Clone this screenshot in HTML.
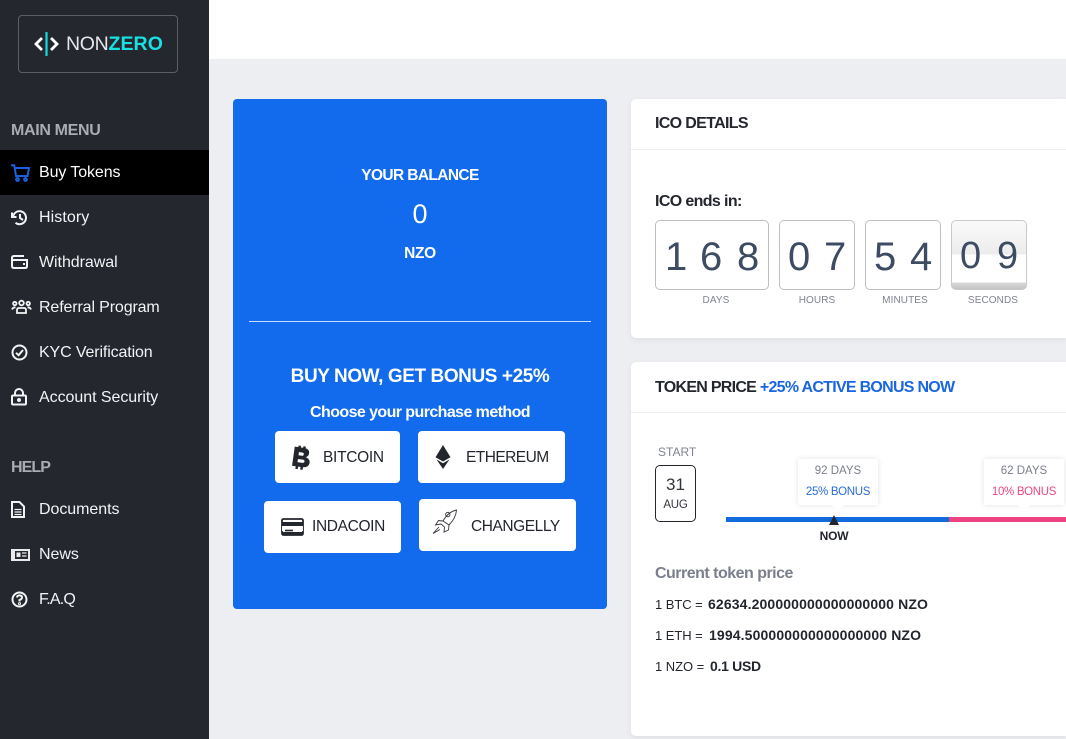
<!DOCTYPE html>
<html><head><meta charset="utf-8"><style>
*{box-sizing:border-box}
html,body{margin:0;padding:0;width:1066px;height:739px;overflow:hidden;background:#edeef2;font-family:"Liberation Sans",sans-serif;color:#23262d}
.a{position:absolute;white-space:nowrap}
.c{text-align:center}
.b{font-weight:700}
#side{position:absolute;left:0;top:0;width:209px;height:739px;background:#24272e}
.nav{position:absolute;left:39px;font-size:16px;line-height:20px;color:#f2f3f5;white-space:nowrap;letter-spacing:-.05px}
.sec{position:absolute;left:11px;font-size:16px;line-height:20px;font-weight:700;color:#a9abb5;white-space:nowrap}
.ic{position:absolute;left:11px;fill:none;stroke:#f2f3f5;stroke-width:2}
.card{position:absolute;background:#fff;border-radius:5px 0 0 5px;box-shadow:0 2px 6px rgba(60,60,80,.08)}
.btn{position:absolute;background:#fff;border-radius:4px;font-size:15.5px;line-height:20px;color:#23262d}
.box{position:absolute;top:220px;height:70px;border:1px solid #bdbfc4;border-radius:5px;background:#fff;color:#3d4c63;font-size:40px;line-height:72px;white-space:nowrap}
.box span{position:absolute;top:0}
.lbl{position:absolute;top:295px;font-size:10px;line-height:12px;letter-spacing:.1px;color:#7f8391;text-align:center;white-space:nowrap}
.tip{position:absolute;top:459px;width:80px;height:46px;background:#fff;box-shadow:0 0 5px rgba(60,60,80,.15);font-size:11.5px;text-align:center}
.tip i{position:absolute;left:34px;bottom:-6px;width:0;height:0;border-left:6px solid transparent;border-right:6px solid transparent;border-top:6px solid #fff}
.p{font-size:13px;line-height:16px;letter-spacing:-.05px}
.p b{position:absolute;top:-1px;font-size:14px;letter-spacing:.13px}
</style></head><body>
<div id="side">
<div class="a" style="left:18px;top:15px;width:160px;height:58px;border:1px solid #5b5e66;border-radius:4px"></div>
<svg class="a" style="left:33px;top:31px" width="28" height="26" viewBox="0 0 28 26"><path d="M9 7L3 13L9 19" fill="none" stroke="#fff" stroke-width="2.8"/><path d="M18 7L24 13L18 19" fill="none" stroke="#fff" stroke-width="2.8"/><path d="M13.5 1V25" stroke="#17d9e0" stroke-width="2.2"/></svg>
<div class="a" style="left:66px;top:33px;font-size:19.5px;line-height:23px;color:#e6e7ea;letter-spacing:-.3px">NON<span style="font-weight:700;color:#19e0e2;letter-spacing:.1px">ZERO</span></div>
<div class="sec" style="top:121px;letter-spacing:-.33px">MAIN MENU</div>
<div class="a" style="left:0;top:150px;width:209px;height:45px;background:#000"></div>
<svg class="ic" style="top:164px;stroke:#1c5fe0" width="19" height="18" viewBox="0 0 19 18"><path d="M0 1.2H3.2L5 12H16.5L18 4H3.8"/><circle cx="6.5" cy="15.5" r="1.4"/><circle cx="14.5" cy="15.5" r="1.4"/></svg>
<div class="nav" style="top:163px;color:#fff;letter-spacing:-.1px">Buy Tokens</div>
<svg class="ic" style="top:209px" width="17" height="17" viewBox="0 0 17 17"><path d="M2 8.5A6.5 6.5 0 1 1 4.5 13.8"/><path d="M1 3.5V8H5.5"/><path d="M9 5V9L12 11"/></svg>
<div class="nav" style="top:208px;letter-spacing:.08px">History</div>
<svg class="ic" style="top:254px" width="17" height="16" viewBox="0 0 17 16"><path d="M13 2H3Q1 2 1 4V12Q1 14 3 14H14Q16 14 16 12V6H1.5"/><path d="M12 10H14"/></svg>
<div class="nav" style="top:253px">Withdrawal</div>
<svg class="ic" style="top:299px;stroke-width:1.8" width="21" height="16" viewBox="0 0 21 16"><circle cx="10.5" cy="4" r="2.3"/><circle cx="3.8" cy="4.5" r="1.7"/><circle cx="17.2" cy="4.5" r="1.7"/><path d="M6 14V11Q6 9 8 9H13Q15 9 15 11V14Z"/><path d="M1 10.5Q2 8 4.5 8.5M20 10.5Q19 8 16.5 8.5"/></svg>
<div class="nav" style="top:298px;letter-spacing:-.13px">Referral Program</div>
<svg class="ic" style="top:344px" width="17" height="17" viewBox="0 0 17 17"><circle cx="8.5" cy="8.5" r="7"/><path d="M5 8.8L7.6 11.2L12 6"/></svg>
<div class="nav" style="top:343px;letter-spacing:-.13px">KYC Verification</div>
<svg class="ic" style="top:388px" width="16" height="18" viewBox="0 0 16 18"><rect x="1" y="7.5" width="14" height="9" rx="1"/><path d="M4 7.5V5A4 4 0 0 1 12 5V7.5"/><circle cx="8" cy="12" r="1" fill="#f2f3f5"/></svg>
<div class="nav" style="top:388px">Account Security</div>
<div class="sec" style="top:458px;letter-spacing:-.9px">HELP</div>
<svg class="ic" style="top:501px" width="14" height="17" viewBox="0 0 14 17"><path d="M1 1H8.5L13 5.5V16H1Z"/><path d="M3.5 8.5H10.5M3.5 11H10.5M3.5 13.5H10.5" stroke-width="1.3"/></svg>
<div class="nav" style="top:500px">Documents</div>
<svg class="ic" style="top:549px;stroke:none" width="19" height="12" viewBox="0 0 19 12"><rect x="0" y="0" width="19" height="12" fill="#e9e9ec"/><rect x="4" y="2" width="13" height="8" fill="#24272e"/><rect x="5.5" y="3.5" width="4" height="4.5" fill="#e9e9ec"/><path d="M11 4H15.5M11 7H15.5" stroke="#e9e9ec" stroke-width="1.3"/></svg>
<div class="nav" style="top:545px">News</div>
<svg class="ic" style="top:591px" width="17" height="17" viewBox="0 0 17 17"><circle cx="8.5" cy="8.5" r="7"/><path d="M6 6.5Q6.2 4.4 8.5 4.4Q11 4.4 11 6.5Q11 8 8.5 9V10.5"/><circle cx="8.5" cy="12.6" r=".5"/></svg>
<div class="nav" style="top:590px;letter-spacing:-.8px">F.A.Q</div>
</div>

<div class="a" style="left:209px;top:0;width:857px;height:59px;background:#fff"></div>

<div class="a" style="left:233px;top:99px;width:374px;height:510px;background:#116bec;border-radius:4px"></div>
<div class="a c b" style="left:233px;top:167px;width:374px;font-size:15.5px;line-height:18px;color:#fff;letter-spacing:-.62px">YOUR BALANCE</div>
<div class="a c" style="left:233px;top:199px;width:374px;font-size:27px;line-height:30px;color:#fff">0</div>
<div class="a c b" style="left:233px;top:245px;width:374px;font-size:15.5px;line-height:18px;color:#fff;letter-spacing:-.3px">NZO</div>
<div class="a" style="left:249px;top:321px;width:342px;height:1px;background:#c9dbf8"></div>
<div class="a c b" style="left:233px;top:366px;width:374px;font-size:19px;line-height:22px;color:#fff;letter-spacing:-.42px">BUY NOW, GET BONUS +25%</div>
<div class="a c b" style="left:233px;top:403px;width:374px;font-size:16px;line-height:19px;color:#fff;letter-spacing:-.58px">Choose your purchase method</div>

<div class="btn" style="left:275px;top:431px;width:125px;height:52px"><span class="a" style="left:48px;top:17px;letter-spacing:-.29px">BITCOIN</span>
<svg class="a" style="left:15px;top:14px" width="22" height="25" viewBox="0 0 22 25"><g transform="rotate(8 11 12) translate(-1.5 0) scale(1.22 1)"><path d="M4 3H11.5Q16 3 16 7.5Q16 10.5 13 11.5Q17.5 12.5 17.5 16.5Q17.5 21.5 12 21.5H4M7 7V11H11Q12.6 11 12.6 9Q12.6 7 11 7ZM7 14V18H12Q14 18 14 16Q14 14 12 14Z" fill="#23262d" fill-rule="evenodd" stroke="#23262d" stroke-width=".8"/><path d="M7 3V21M8 1V3M12 1V3M8 21V24.5M12 21V24.5" stroke="#23262d" stroke-width="2"/></g></svg></div>
<div class="btn" style="left:418px;top:431px;width:147px;height:52px"><span class="a" style="left:48px;top:17px;letter-spacing:-.55px">ETHEREUM</span>
<svg class="a" style="left:17px;top:14px" width="16" height="25" viewBox="0 0 16 25"><path d="M8 0L15.5 12.2L8 16.5L.5 12.2Z" fill="#23262d"/><path d="M1.5 14.5L8 18.3L14.5 14.5L8 24Z" fill="#23262d"/></svg></div>
<div class="btn" style="left:264px;top:501px;width:137px;height:52px"><span class="a" style="left:48px;top:16px;letter-spacing:-.35px">INDACOIN</span>
<svg class="a" style="left:17px;top:17px" width="23" height="18" viewBox="0 0 23 18"><rect x="1" y="1" width="21" height="16" rx="1.5" fill="#fff" stroke="#23262d" stroke-width="1.8"/><rect x="1" y="4" width="21" height="4" fill="#23262d"/><rect x="1" y="8" width="21" height="5" fill="#fff"/><path d="M4 12.5H12" stroke="#23262d" stroke-width="1.6"/><rect x="1" y="14" width="21" height="3" rx="1" fill="#23262d"/></svg></div>
<div class="btn" style="left:419px;top:499px;width:157px;height:52px"><span class="a" style="left:52px;top:18px;letter-spacing:-.44px">CHANGELLY</span>
<svg class="a" style="left:13px;top:10px" width="26" height="26" viewBox="0 0 26 26"><g fill="none" stroke="#33363c" stroke-width=".9"><path d="M24.5 1Q24 9 17 16L11 12Q16 3 24.5 1Z"/><path d="M18 5.5A2.2 2.2 0 1 0 18 5.6"/><path d="M11 12L6.5 11.5L3.5 16L9 15"/><path d="M17 16L16.5 21L12 23L12.5 18"/><path d="M9 15L12.5 18"/><path d="M7 18L1 24.5L8 20.5"/></g></svg></div>

<div class="card" style="left:631px;top:99px;width:435px;height:239px"></div>
<div class="a" style="left:631px;top:149px;width:435px;height:1px;background:#eceded"></div>
<div class="a b" style="left:655px;top:115px;font-size:16px;line-height:18px;letter-spacing:-.66px">ICO DETAILS</div>
<div class="a b" style="left:655px;top:193px;font-size:16px;line-height:18px;letter-spacing:-.63px">ICO ends in:</div>

<div class="box" style="left:655px;width:114px"><span style="left:9px">1</span><span style="left:44px">6</span><span style="left:81px">8</span></div>
<div class="box" style="left:779px;width:76px"><span style="left:8px">0</span><span style="left:44px">7</span></div>
<div class="box" style="left:865px;width:76px"><span style="left:8px">5</span><span style="left:44px">4</span></div>
<div class="box" style="left:951px;width:76px;overflow:hidden;border-color:#c9c9c9;background:linear-gradient(#fafafa 0,#ececec 33px,#fff 34px,#fff 61px,#d8d8d8 62px,#c4c4c4 100%)"><span style="left:8px;font-size:38px;top:-1px">0</span><span style="left:45px;font-size:38px;top:-1px">9</span></div>
<div class="lbl" style="left:655px;width:122px">DAYS</div>
<div class="lbl" style="left:779px;width:76px">HOURS</div>
<div class="lbl" style="left:867px;width:76px">MINUTES</div>
<div class="lbl" style="left:955px;width:76px">SECONDS</div>

<div class="card" style="left:631px;top:362px;width:435px;height:374px"></div>
<div class="a" style="left:631px;top:412px;width:435px;height:1px;background:#eceded"></div>
<div class="a b" style="left:655px;top:379px;font-size:16px;line-height:18px;letter-spacing:-.72px">TOKEN PRICE <span style="color:#1a66e0">+25% ACTIVE BONUS NOW</span></div>

<div class="a" style="left:658px;top:445px;font-size:12px;line-height:14px;color:#7f8391">START</div>
<div class="a" style="left:655px;top:465px;width:41px;height:57px;border:1px solid #23262d;border-radius:5px;background:#fff"></div>
<div class="a c" style="left:655px;top:475px;width:41px;font-size:17px;line-height:20px;color:#33363c">31</div>
<div class="a c" style="left:655px;top:498px;width:41px;font-size:11.5px;line-height:14px;color:#33363c;letter-spacing:-.2px">AUG</div>

<div class="tip" style="left:798px"><i></i><div class="a" style="left:0;width:80px;top:5px;color:#7b7f8b;line-height:14px">92 DAYS</div><div class="a" style="left:0;width:80px;top:26px;color:#2a6ada;line-height:14px;letter-spacing:-.33px">25% BONUS</div></div>
<div class="tip" style="left:984px"><i></i><div class="a" style="left:0;width:80px;top:5px;color:#7b7f8b;line-height:14px">62 DAYS</div><div class="a" style="left:0;width:80px;top:26px;color:#e9487f;line-height:14px;letter-spacing:-.33px">10% BONUS</div></div>
<div class="a" style="left:726px;top:517px;width:223px;height:5px;background:#116bdc"></div>
<div class="a" style="left:949px;top:517px;width:117px;height:5px;background:#ec4382"></div>
<svg class="a" style="left:828px;top:515px" width="12" height="10" viewBox="0 0 12 10"><path d="M6 0L11 10H1Z" fill="#23262d"/></svg>
<div class="a c b" style="left:804px;top:529px;width:60px;font-size:12px;line-height:14px;letter-spacing:-.2px">NOW</div>

<div class="a b" style="left:655px;top:565px;font-size:16px;line-height:18px;color:#7b7f8d;letter-spacing:-.51px">Current token price</div>
<div class="a p" style="left:655px;top:597px">1 BTC =<b style="left:53px">62634.200000000000000000 NZO</b></div>
<div class="a p" style="left:655px;top:628px">1 ETH =<b style="left:54px">1994.500000000000000000 NZO</b></div>
<div class="a p" style="left:655px;top:659px">1 NZO =<b style="left:55px;letter-spacing:-.3px">0.1 USD</b></div>
</body></html>
